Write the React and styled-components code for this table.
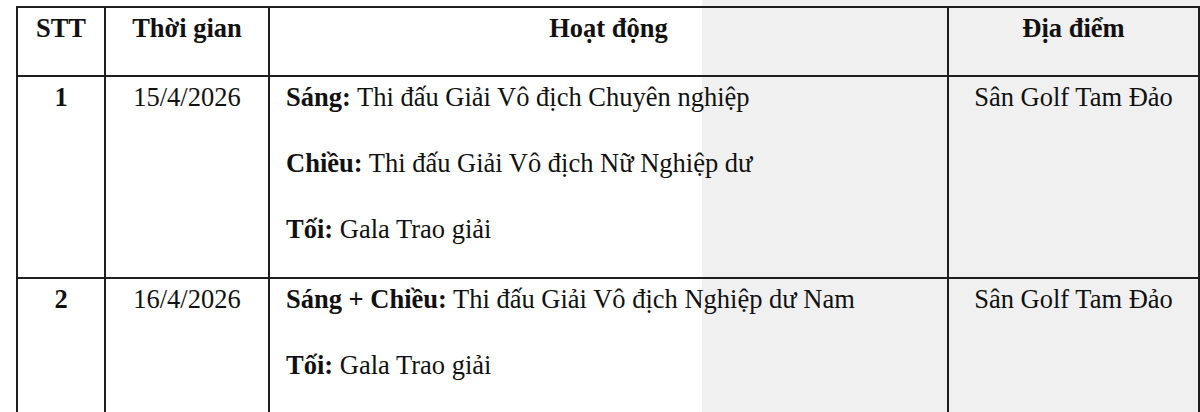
import React from "react";
import styled, { createGlobalStyle } from "styled-components";

const GlobalStyle = createGlobalStyle`
  html, body {
    margin: 0;
    padding: 0;
  }
  body {
    height: 412px;
    overflow: hidden;
    font-family: "Liberation Serif", "Times New Roman", serif;
    color: #111;
    background: linear-gradient(to right, #ffffff 702px, #f0f0f0 702px);
  }
`;

const Page = styled.div`
  padding: 6px 0 0 16px;
`;

const Table = styled.table`
  width: 1182px;
  table-layout: fixed;
  border-collapse: collapse;
  font-size: 26.5px;
`;

const HeadCell = styled.th`
  border: 2px solid #1e1e1e;
  padding: 5px 16px 32px;
  line-height: 30px;
  font-weight: bold;
  text-align: center;
  vertical-align: top;
`;

const Cell = styled.td`
  border: 2px solid #1e1e1e;
  padding: 5px 16px ${(p) => (p.$last ? "60px" : "33px")};
  line-height: 30px;
  text-align: ${(p) => p.$align || "center"};
  vertical-align: top;
`;

const Strong = styled.b`
  font-weight: bold;
`;

const Line = styled.p`
  margin: 0;
  & + & {
    margin-top: 36px;
  }
`;

const schedule = [
  {
    no: "1",
    date: "15/4/2026",
    items: [
      ["Sáng:", "Thi đấu Giải Vô địch Chuyên nghiệp"],
      ["Chiều:", "Thi đấu Giải Vô địch Nữ Nghiệp dư"],
      ["Tối:", "Gala Trao giải"],
    ],
    place: "Sân Golf Tam Đảo",
  },
  {
    no: "2",
    date: "16/4/2026",
    items: [
      ["Sáng + Chiều:", "Thi đấu Giải Vô địch Nghiệp dư Nam"],
      ["Tối:", "Gala Trao giải"],
    ],
    place: "Sân Golf Tam Đảo",
  },
];

export default function App() {
  return (
    <>
      <GlobalStyle />
      <Page>
        <Table>
          <colgroup>
            <col style={{ width: 88 }} />
            <col style={{ width: 164 }} />
            <col style={{ width: 679 }} />
            <col style={{ width: 251 }} />
          </colgroup>
          <thead>
            <tr>
              <HeadCell>STT</HeadCell>
              <HeadCell>Thời gian</HeadCell>
              <HeadCell>Hoạt động</HeadCell>
              <HeadCell>Địa điểm</HeadCell>
            </tr>
          </thead>
          <tbody>
            {schedule.map((row, i) => {
              const last = i === schedule.length - 1;
              return (
                <tr key={row.no}>
                  <Cell $last={last}>
                    <Strong>{row.no}</Strong>
                  </Cell>
                  <Cell $last={last}>{row.date}</Cell>
                  <Cell $last={last} $align="left">
                    {row.items.map(([label, text]) => (
                      <Line key={label}>
                        <Strong>{label}</Strong> {text}
                      </Line>
                    ))}
                  </Cell>
                  <Cell $last={last}>{row.place}</Cell>
                </tr>
              );
            })}
          </tbody>
        </Table>
      </Page>
    </>
  );
}
